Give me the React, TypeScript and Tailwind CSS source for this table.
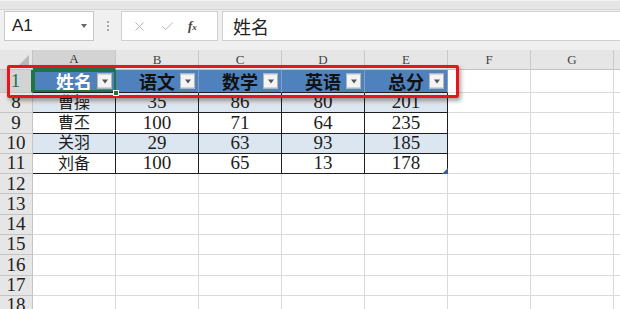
import { X, Check } from 'lucide-react'

const serif = { fontFamily: '"Liberation Serif", "Noto Sans CJK SC", serif' }

const cols = ['A', 'B', 'C', 'D', 'E', 'F', 'G']
const headers = ['姓名', '语文', '数学', '英语', '总分']
const rows: [number, string[]][] = [
  [8, ['曹操', '35', '86', '80', '201']],
  [9, ['曹丕', '100', '71', '64', '235']],
  [10, ['关羽', '29', '63', '93', '185']],
  [11, ['刘备', '100', '65', '13', '178']],
]
const emptyRows = [12, 13, 14, 15, 16, 17, 18]

function FilterButton() {
  return (
    <span className="absolute right-[3px] top-1/2 -translate-y-1/2 w-[15px] h-[15px] bg-[#f4f4f4] border border-[#b5b5b5] flex items-center justify-center">
      <span className="w-0 h-0 border-l-[3px] border-r-[3px] border-t-[4px] border-l-transparent border-r-transparent border-t-[#555]" />
    </span>
  )
}

export default function App() {
  return (
    <div className="w-[620px] h-[309px] overflow-hidden bg-white relative select-none" style={serif}>
      {/* ribbon edge */}
      <div className="h-[10px] bg-[#e6e6e6] border-t border-[#f2f2f2] border-b border-b-[#d4d4d4]" />

      {/* name box + formula bar */}
      <div className="h-[40px] bg-[#f0f0f0] flex items-start pt-[1px] pl-[4px]" style={{ fontFamily: '"Liberation Sans", "Noto Sans CJK SC", sans-serif' }}>
        <div className="w-[90px] h-[30px] bg-white border border-[#c8c8c8] flex items-center justify-between pl-[7px] pr-[6px]">
          <span className="text-[17px] text-[#222]">A1</span>
          <span className="w-0 h-0 border-l-[3px] border-r-[3px] border-t-[4px] border-l-transparent border-r-transparent border-t-[#666]" />
        </div>
        <div className="w-[27px] h-[30px] flex flex-col items-center justify-center gap-[2px]">
          <span className="w-[2px] h-[2px] bg-[#a8a8a8]" />
          <span className="w-[2px] h-[2px] bg-[#a8a8a8]" />
          <span className="w-[2px] h-[2px] bg-[#a8a8a8]" />
        </div>
        <div className="w-[97px] h-[30px] bg-white border border-[#d0d0d0] flex items-center pl-[10px] gap-[13px]">
          <X size={15} strokeWidth={1.5} className="text-[#b0b0b0]" />
          <Check size={15} strokeWidth={1.5} className="text-[#b0b0b0]" />
          <span className="text-[13px] italic font-semibold text-[#444]" style={serif}>f<span className="text-[9px]">x</span></span>
        </div>
        <div className="flex-1 ml-[4px] h-[30px] bg-white border border-[#d0d0d0] border-r-0 flex items-center pl-[10px]">
          <span className="text-[18px] text-[#222]" style={{ fontFamily: '"Noto Sans CJK SC", sans-serif' }}>姓名</span>
        </div>
      </div>

      {/* sheet grid */}
      <div className="grid grid-cols-[33px_repeat(7,83px)_1fr]">
        {/* column headers */}
        <div className="h-[20px] bg-[#e6e6e6] border-r border-b border-[#c4c4c4] relative">
          <span className="absolute right-[3px] bottom-[3px] w-0 h-0" style={{ borderBottom: '11px solid #b9b9b9', borderLeft: '11px solid transparent' }} />
        </div>
        {cols.map(c => (
          <div
            key={c}
            className={`h-[20px] flex items-center justify-center text-[13px] border-r border-[#c9c9c9] ${c === 'A' ? 'bg-[#d3d3d3] text-[#333] border-b-2 border-b-[#217346]' : 'bg-[#e6e6e6] text-[#444] border-b border-b-[#c4c4c4]'}`}
          >
            {c}
          </div>
        ))}
        <div className="h-[20px] bg-[#e6e6e6] border-b border-[#c4c4c4]" />

        {/* row 1: table header */}
        <div className="h-[23px] bg-[#d3d3d3] border-r-2 border-r-[#217346] border-b border-[#c4c4c4] flex items-center justify-center text-[19px] text-[#217346]">1</div>
        {headers.map((h, i) => (
          <div
            key={h}
            className={`h-[23px] bg-[#4f81bd] relative flex items-center justify-center border-b border-b-[#1f1f1f] ${i === 0 ? 'border-r border-r-[#1f1f1f]' : 'border-r border-r-[#7fa0cf]'}`}
          >
            <span className={`text-[18px] font-bold ${i === 0 ? 'text-white' : 'text-[#111]'}`} style={{ fontFamily: '"Noto Sans CJK SC", sans-serif' }}>{h}</span>
            <FilterButton />
            {i === 0 && (
              <>
                <span className="absolute inset-0 border-2 border-[#217346] -mr-px" />
                <span className="absolute right-[-4px] bottom-[-4px] w-[6px] h-[6px] bg-[#217346] border border-white z-10" />
              </>
            )}
          </div>
        ))}
        <div className="h-[23px] border-r border-b border-[#dadada]" />
        <div className="h-[23px] border-r border-b border-[#dadada]" />
        <div className="h-[23px] border-b border-[#dadada]" />

        {/* data rows */}
        {rows.map(([n, vals], r) => (
          <div key={n} className="contents">
            <div className="h-[20.3px] bg-[#e6e6e6] border-r border-b border-[#c4c4c4] flex items-center justify-center text-[19px] text-[#222]">{n}</div>
            {vals.map((v, i) => (
              <div
                key={i}
                className={`h-[20.3px] relative flex items-center justify-center border-r border-b border-[#1f1f1f] text-[#1c1c1c] ${r % 2 === 0 ? 'bg-[#dce6f1]' : 'bg-white'} ${i === 0 ? 'text-[16px]' : 'text-[19px]'}`}
              >
                {v}
                {r === rows.length - 1 && i === vals.length - 1 && (
                  <span className="absolute right-[-1px] bottom-[-1px] w-0 h-0 border-l-[6px] border-b-[6px] border-l-transparent border-b-[#3b57a8]" />
                )}
              </div>
            ))}
            <div className="h-[20.3px] border-r border-b border-[#dadada]" />
            <div className="h-[20.3px] border-r border-b border-[#dadada]" />
            <div className="h-[20.3px] border-b border-[#dadada]" />
          </div>
        ))}

        {/* empty rows */}
        {emptyRows.map(n => (
          <div key={n} className="contents">
            <div className="h-[20.3px] bg-[#e6e6e6] border-r border-b border-[#c4c4c4] flex items-center justify-center text-[19px] text-[#222]">{n}</div>
            {cols.map(c => (
              <div key={c} className="h-[20.3px] border-r border-b border-[#dadada]" />
            ))}
            <div className="h-[20.3px] border-b border-[#dadada]" />
          </div>
        ))}
      </div>

      {/* red highlight around the header row */}
      <div className="absolute left-[7px] top-[65px] w-[452px] h-[33px] border-[3px] border-[#e8161c] rounded-[2px] shadow-[2px_3px_4px_rgba(0,0,0,0.35)] pointer-events-none" />
    </div>
  )
}
